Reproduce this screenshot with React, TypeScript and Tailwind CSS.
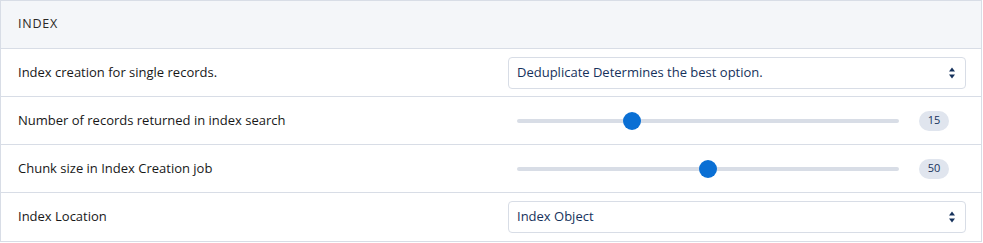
const ROWS = [
  { label: 'Index creation for single records.', kind: 'select', value: 'Deduplicate Determines the best option.' },
  { label: 'Number of records returned in index search', kind: 'slider', value: 15, max: 50 },
  { label: 'Chunk size in Index Creation job', kind: 'slider', value: 50, max: 100 },
  { label: 'Index Location', kind: 'select', value: 'Index Object' },
] as const;

function SelectBox({ value }: { value: string }) {
  return (
    <div className="flex h-8 w-full items-center justify-between rounded border border-[#d8dde6] bg-white pl-[8px] pr-[9px] text-[13px] text-[#16325c]">
      <span>{value}</span>
      <svg width="8" height="14" viewBox="0 0 8 14" className="text-[#16325c]">
        <path d="M4 1.5 L7 5.5 H1 Z" fill="currentColor" />
        <path d="M4 12.5 L7 8.5 H1 Z" fill="currentColor" />
      </svg>
    </div>
  );
}

function Slider({ value, max }: { value: number; max: number }) {
  const pct = (value / max) * 100;
  return (
    <div className="flex w-full items-center pl-[9px] pr-[17px]">
      <div className="relative h-[4px] flex-1 rounded-full bg-[#d8dde6]">
        <div
          className="absolute top-1/2 h-[18px] w-[18px] -translate-x-1/2 -translate-y-1/2 rounded-full bg-[#0a6fd4]"
          style={{ left: `${pct}%` }}
        />
      </div>
      <span className="ml-5 flex h-5 w-[30px] items-center justify-center rounded-full bg-[#e0e5ee] text-[11px] text-[#16325c]">
        {value}
      </span>
    </div>
  );
}

export default function App() {
  return (
    <div className="w-[982px] bg-white font-['Open_Sans',sans-serif] text-[#181818]">
      <div className="border border-[#d8dde6]">
        <div className="flex h-[48px] items-center border-b border-[#d8dde6] bg-[#f4f6f9] pl-[17px] text-[12.5px] tracking-[0.06em] text-[#2b2826]">
          INDEX
        </div>
        {ROWS.map((row, i) => (
          <div
            key={row.label}
            className={`grid h-[48px] grid-cols-2 items-center ${i < ROWS.length - 1 ? 'border-b border-[#d8dde6]' : ''}`}
          >
            <div className="pl-[17px] text-[13px]">{row.label}</div>
            <div className="pl-[17px] pr-[15px]">
              {row.kind === 'select' ? <SelectBox value={row.value} /> : <Slider value={row.value} max={row.max} />}
            </div>
          </div>
        ))}
      </div>
    </div>
  );
}
